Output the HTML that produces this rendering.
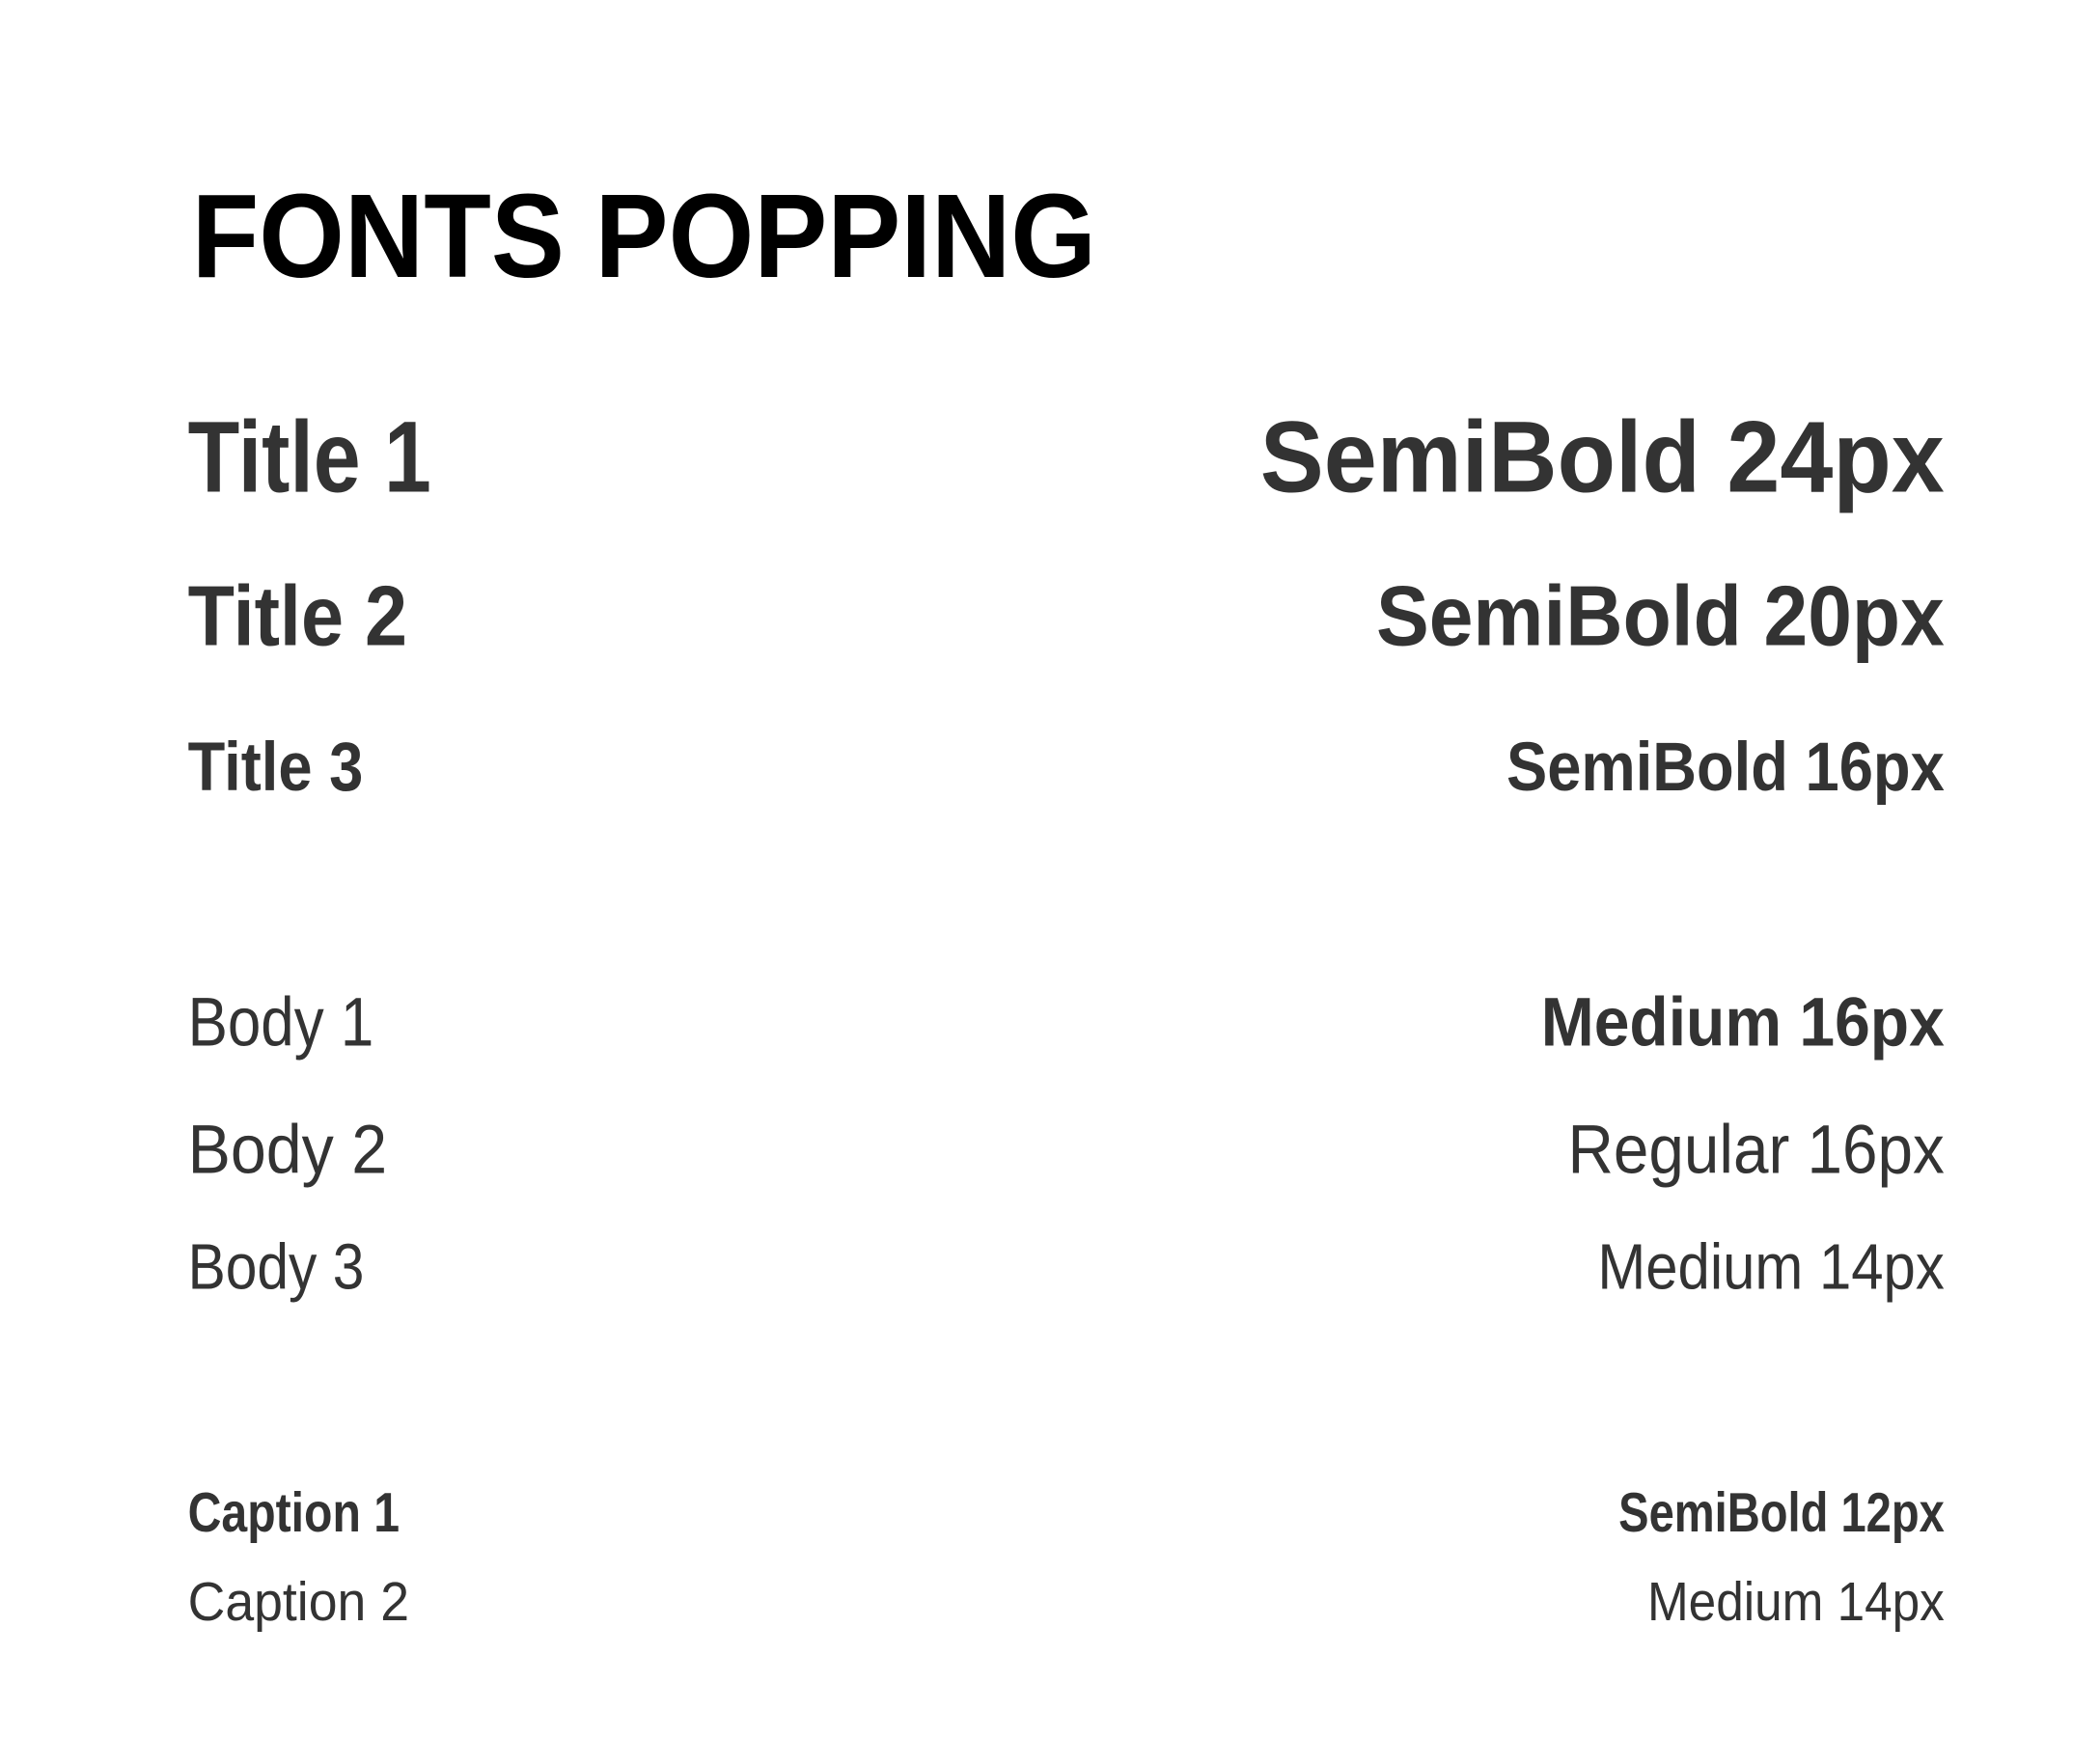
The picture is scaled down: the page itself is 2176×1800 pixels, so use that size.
<!DOCTYPE html>
<html><head><meta charset="utf-8"><style>
html,body{margin:0;padding:0;background:#fff;width:2176px;height:1800px;overflow:hidden}
svg{display:block}
text{font-family:"Liberation Sans",sans-serif}
</style></head><body>
<svg width="2176" height="1800" viewBox="0 0 2176 1800" xmlns="http://www.w3.org/2000/svg">
<rect width="2176" height="1800" fill="#fff"/>
<g transform="scale(0.993)">
<text x="200" y="289" font-size="124" font-weight="700" fill="#000" textLength="944" lengthAdjust="spacingAndGlyphs">FONTS POPPING</text>
<g fill="#333">
<text x="196" y="513" font-size="106" font-weight="700" textLength="254" lengthAdjust="spacingAndGlyphs">Title 1</text>
<text x="2029" y="513" font-size="106" font-weight="700" text-anchor="end" textLength="714" lengthAdjust="spacingAndGlyphs">SemiBold 24px</text>
<text x="196" y="673" font-size="89" font-weight="700" textLength="229" lengthAdjust="spacingAndGlyphs">Title 2</text>
<text x="2029" y="673" font-size="89" font-weight="700" text-anchor="end" textLength="593" lengthAdjust="spacingAndGlyphs">SemiBold 20px</text>
<text x="196" y="825" font-size="72" font-weight="700" textLength="183" lengthAdjust="spacingAndGlyphs">Title 3</text>
<text x="2029" y="825" font-size="72" font-weight="700" text-anchor="end" textLength="457" lengthAdjust="spacingAndGlyphs">SemiBold 16px</text>
<text x="196" y="1091" font-size="72" font-weight="500" textLength="194" lengthAdjust="spacingAndGlyphs">Body 1</text>
<text x="2029" y="1091" font-size="72" font-weight="700" text-anchor="end" textLength="421" lengthAdjust="spacingAndGlyphs">Medium 16px</text>
<text x="196" y="1224" font-size="72" font-weight="300" textLength="208" lengthAdjust="spacingAndGlyphs">Body 2</text>
<text x="2029" y="1224" font-size="72" font-weight="300" text-anchor="end" textLength="393" lengthAdjust="spacingAndGlyphs">Regular 16px</text>
<text x="196" y="1345" font-size="67" font-weight="500" textLength="184" lengthAdjust="spacingAndGlyphs">Body 3</text>
<text x="2029" y="1345" font-size="67" font-weight="500" text-anchor="end" textLength="362" lengthAdjust="spacingAndGlyphs">Medium 14px</text>
<text x="196" y="1598" font-size="58" font-weight="700" textLength="221" lengthAdjust="spacingAndGlyphs">Caption 1</text>
<text x="2029" y="1598" font-size="58" font-weight="700" text-anchor="end" textLength="340" lengthAdjust="spacingAndGlyphs">SemiBold 12px</text>
<text x="196" y="1691" font-size="57" font-weight="500" textLength="231" lengthAdjust="spacingAndGlyphs">Caption 2</text>
<text x="2029" y="1691" font-size="57" font-weight="500" text-anchor="end" textLength="310" lengthAdjust="spacingAndGlyphs">Medium 14px</text>
</g>
</g>
</svg>
</body></html>
